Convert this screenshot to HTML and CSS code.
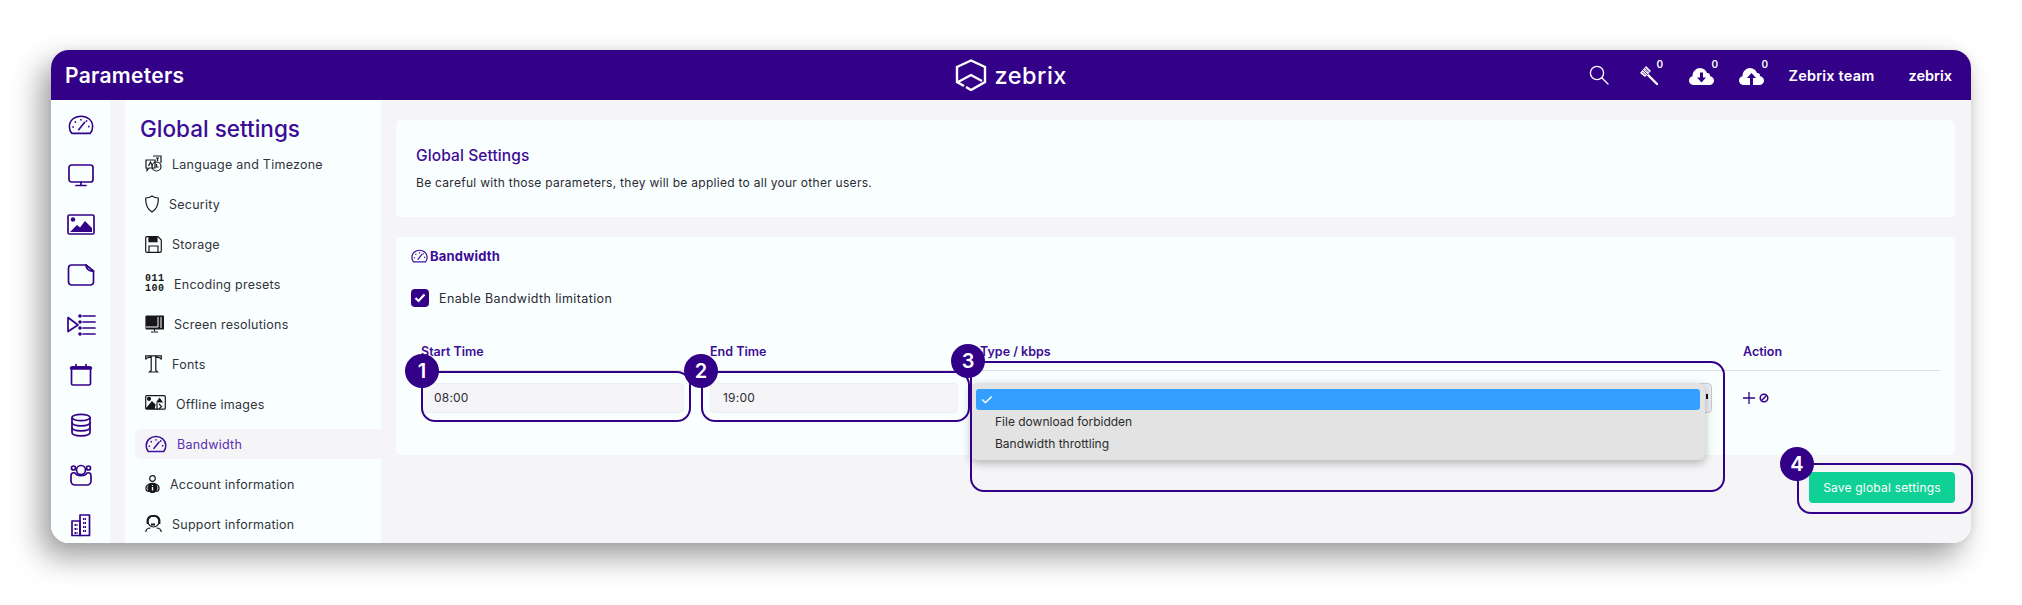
FILE: index.html
```html
<!DOCTYPE html>
<html lang="en">
<head>
  <title>Parameters | Zebrix</title>
  <meta charset="UTF-8" />
  <link rel="stylesheet" href="styles.css">
</head>
<body>
  <div class="app">
    <div class="topbar">
      <div class="page-name">Parameters</div>
      <div class="logo">
        <svg width="32" height="32" viewBox="0 0 32 32" fill="none" stroke="#fff" stroke-width="2.4" stroke-linejoin="miter">
          <path d="M9 27 L2 23 V8 L16 1.5 L30 8 V23 L16 31 L11 28"/>
          <path d="M3 23 L16 16 L27 22"/>
        </svg>
        <span>zebrix</span>
      </div>
      <div class="top-tools">
        <svg class="tool" width="20" height="20" viewBox="0 0 20 20" fill="none" stroke="#fff" stroke-width="1.3">
          <circle cx="8" cy="8" r="6.6"/><path d="M13 13 L19 19" stroke-linecap="round"/>
        </svg>
        <div class="tool-count">
          <svg width="20" height="22" viewBox="0 0 20 22" fill="#fff">
            <path d="M1 9 L7 2 L12 7 L6 13 Z"/><path d="M9 11 L18 20" stroke="#fff" stroke-width="2.4" stroke-linecap="round"/>
            <path d="M3.500 8 L6.500 11 M6 5.500 L9 8.500 M4 6 L9 11 M6 4 L10.500 8" stroke="#330088" stroke-width=".8"/>
          </svg>
          <sup>0</sup>
        </div>
        <div class="tool-count">
          <svg width="25" height="22" viewBox="0 0 25 22">
            <path fill="#fff" d="M5 21 C1.500 21 0 18.500 0 16.500 C0 14 1.700 12.600 3.500 12.200 C3.500 7 7.500 4 11 4 C14.500 4 17 6.200 18 9 C19 8.600 21.500 9.500 21 12 C23.500 12.600 25 14.500 25 16.500 C25 19 23 21 20 21 Z"/>
            <path fill="#330088" d="M11 8.500 H14 V13.500 H17 L12.500 18.500 L8 13.500 H11 Z"/>
          </svg>
          <sup>0</sup>
        </div>
        <div class="tool-count">
          <svg width="25" height="22" viewBox="0 0 25 22">
            <path fill="#fff" d="M5 21 C1.500 21 0 18.500 0 16.500 C0 14 1.700 12.600 3.500 12.200 C3.500 7 7.500 4 11 4 C14.500 4 17 6.200 18 9 C19 8.600 21.500 9.500 21 12 C23.500 12.600 25 14.500 25 16.500 C25 19 23 21 20 21 Z"/>
            <path fill="#330088" d="M11 21 V14 H8 L12.500 9 L17 14 H14 V21 Z"/>
          </svg>
          <sup>0</sup>
        </div>
        <span class="top-link team">Zebrix team</span>
        <span class="top-link">zebrix</span>
      </div>
    </div>

    <div class="content">
      <div class="rail">
        <svg width="26" height="28" viewBox="0 0 28 28"><path d="M4 23 C1.500 20 1.500 17 1.500 15.500 C1.500 9 7 4.500 14 4.500 C21 4.500 26.500 9 26.500 15.500 C26.500 17 26.500 20 24 23 Z"/><path d="M11.500 19 L18 11"/><path d="M14 8 v.5 M8 10.500 v.5 M5.500 16 v.5 M20 9.500 v.5 M22.500 15.500 v.5"/></svg>
        <svg width="28" height="28" viewBox="0 0 28 28"><rect x="2" y="4" width="24" height="17" rx="2.500"/><path d="M14 21 v3 M9 24.500 h10"/></svg>
        <svg width="28" height="28" viewBox="0 0 28 28"><rect x="1" y="4" width="26" height="19" rx="1.500"/><circle class="solid" cx="6" cy="8.500" r="2.200"/><path class="solid" d="M3 21 L10 14 L13 16.500 L18 10 L25 17 V21 Z"/></svg>
        <svg width="28" height="28" viewBox="0 0 28 28"><path d="M4.500 4 H19 C19 8 22 10.500 26.500 10 V21 A3 3 0 0 1 23.500 24 H4.500 A3 3 0 0 1 1.500 21 V7 A3 3 0 0 1 4.500 4 Z"/><path d="M19 4 L26.500 10"/></svg>
        <svg width="30" height="28" viewBox="0 0 30 28"><path d="M2 6.500 L12 14 L2 20.500 Z"/><path d="M17 5 H29 M17 11 H29 M17 17 H29 M17 23 H29"/><circle class="solid" cx="14" cy="5" r="1.800"/><circle class="solid" cx="14" cy="11" r="1.800"/><circle class="solid" cx="14" cy="17" r="1.800"/><circle class="solid" cx="14" cy="23" r="1.800"/></svg>
        <svg width="28" height="28" viewBox="0 0 28 28"><rect x="4.500" y="6" width="19" height="18" rx="1.500"/><path d="M4.500 7 H23.500" stroke-width="3.500"/><path d="M9 3.500 V6 M19 3.500 V6"/></svg>
        <svg width="28" height="28" viewBox="0 0 28 28"><ellipse cx="14" cy="6.500" rx="9" ry="3.200"/><path d="M5 6.500 V21.500 C5 23.500 9 24.800 14 24.800 C19 24.800 23 23.500 23 21.500 V6.500"/><path d="M5 11.500 C5 13.500 9 14.800 14 14.800 C19 14.800 23 13.500 23 11.500 M5 16.500 C5 18.500 9 19.800 14 19.800 C19 19.800 23 18.500 23 16.500"/></svg>
        <svg width="28" height="28" viewBox="0 0 28 28"><circle cx="14" cy="9" r="4.500"/><circle cx="6.500" cy="7" r="2"/><circle cx="21.500" cy="7" r="2"/><path d="M8 12 C5 11 4 13 4 15 V20 A4 4 0 0 0 8 24 H20 A4 4 0 0 0 24 20 V15 C24 13 23 11 20 12 C18 15.500 10 15.500 8 12 Z"/></svg>
        <svg width="28" height="28" viewBox="0 0 28 28"><rect x="13" y="4" width="9.500" height="20.500"/><rect x="5" y="10" width="8" height="14.500"/><path class="dots" d="M7.500 14 h3 M7.500 18 h3 M7.500 22 h3 M16 8 h3 M16 12 h3 M16 16 h3 M16 20 h3"/></svg>
      </div>

      <div class="panel">
        <h2 class="panel-title">Global settings</h2>

        <div class="menu-item">
          <svg width="17" height="18" viewBox="0 0 17 18" class="ico"><path d="M1 5 H10 V13 H4 L2 15.500 V13 H1 Z"/><path d="M8 1 H16 V8"/><circle cx="11.500" cy="11.500" r="4.500"/><path d="M11.500 9 V12 H13.500"/><path d="M3.500 11 L5.500 7 L7.500 11 M11 3 h3 M12.500 3 v3"/></svg>
          <span>Language and Timezone</span>
        </div>
        <div class="menu-item">
          <svg width="14" height="18" viewBox="0 0 14 18" class="ico"><path d="M7 1 C9 2.500 11 3 13.300 3 C13.500 9 12 14 7 17 C2 14 .500 9 .700 3 C3 3 5 2.500 7 1 Z"/></svg>
          <span>Security</span>
        </div>
        <div class="menu-item">
          <svg width="17" height="17" viewBox="0 0 17 17" class="ico"><path d="M1.500 .700 H13 L16.300 4 V15 A1.300 1.300 0 0 1 15 16.300 H2 A1.300 1.300 0 0 1 .700 15 V1.500 Z"/><rect class="fill" x="4" y=".700" width="8" height="5"/><path d="M4 16 V10 H13 V16"/></svg>
          <span>Storage</span>
        </div>
        <div class="menu-item">
          <div class="bits">011<br>100</div>
          <span>Encoding presets</span>
        </div>
        <div class="menu-item">
          <svg width="19" height="18" viewBox="0 0 19 18" class="ico"><rect class="fill" x="1" y="1" width="18" height="13" rx="1"/><path d="M13 2 V12 H1 M16 2 V13" stroke="#fff" stroke-width="1"/><path d="M9.500 14 V16 M6 17 H13"/></svg>
          <span>Screen resolutions</span>
        </div>
        <div class="menu-item">
          <svg width="17" height="18" viewBox="0 0 17 18" class="ico"><path d="M.700 4.500 V.800 H16.300 V4.500 C15.500 3 14 2.200 10.800 2.200 V15.500 L12.500 17 H4.500 L6.200 15.500 V2.200 C3 2.200 1.500 3 .700 4.500 Z"/></svg>
          <span>Fonts</span>
        </div>
        <div class="menu-item">
          <svg width="21" height="18" viewBox="0 0 21 18" class="ico"><rect x=".700" y=".700" width="19.600" height="13.500" rx="1"/><circle class="fill" cx="4" cy="3.800" r="1.500"/><path class="fill" d="M1.500 13.500 L7 7 L10 10 L9 13.500 Z M12 7 L14.500 3.500 L17 7 Z"/><path d="M10 9 L7.500 11.500 L10 14 M14 9 L16.500 11.500 L14 14 M12 8 V15"/></svg>
          <span>Offline images</span>
        </div>
        <div class="menu-item active">
          <svg width="22" height="18" viewBox="0 0 28 23" class="gauge"><path d="M4 21 C1.500 18 1.500 15 1.500 13.500 C1.500 7 7 2 14 2 C21 2 26.500 7 26.500 13.500 C26.500 15 26.500 18 24 21 Z"/><path d="M11.500 17 L18 9"/><path d="M14 6 v.5 M8 8.500 v.5 M5.500 14 v.5 M20 7.500 v.5 M22.500 13.500 v.5"/></svg>
          <span>Bandwidth</span>
        </div>
        <div class="menu-item">
          <svg width="15" height="18" viewBox="0 0 15 18" class="ico"><circle cx="7.500" cy="3.500" r="2.800"/><path d="M4 16.500 C0 16.500 0 11 3.500 9.500 C5.500 8 9.500 8 11.500 9.500 C15 11 15 16.500 11 16.500"/><circle class="fill" cx="7.500" cy="13" r="4.500"/><path d="M7.500 12 V15.500 M7.500 10 V11" stroke="#fff" stroke-width="1.300"/></svg>
          <span>Account information</span>
        </div>
        <div class="menu-item">
          <svg width="17" height="18" viewBox="0 0 17 18" class="ico"><circle cx="8.500" cy="6.500" r="5.500"/><path class="thick" d="M2.500 9 V5 C3 2.500 5.500 .800 8.500 .800 C11.500 .800 14 2.500 14.500 5 V9"/><path class="thick" d="M6 9.500 H10"/><path d="M.800 17 C1 14.500 3 13 5.500 13 M16.200 17 C16 14.500 14 13 11.500 13"/></svg>
          <span>Support information</span>
        </div>
      </div>

      <div class="main">
        <div class="card card-intro">
          <h3>Global Settings</h3>
          <p>Be careful with those parameters, they will be applied to all your other users.</p>
        </div>

        <div class="card card-bandwidth">
          <div class="card-title">
            <svg width="17" height="14" viewBox="0 0 28 23" class="gauge"><path d="M4 21 C1.500 18 1.500 15 1.500 13.500 C1.500 7 7 2 14 2 C21 2 26.500 7 26.500 13.500 C26.500 15 26.500 18 24 21 Z"/><path d="M11.500 17 L18 9"/><path d="M14 6 v.5 M8 8.500 v.5 M5.500 14 v.5 M20 7.500 v.5 M22.500 13.500 v.5"/></svg>
            <span>Bandwidth</span>
          </div>
          <label class="check-row">
            <span class="checkbox">
              <svg width="12" height="10" viewBox="0 0 12 10" fill="none" stroke="#fff" stroke-width="2.200"><path d="M1.500 5 L4.500 8 L10.500 1.500"/></svg>
            </span>
            Enable Bandwidth limitation
          </label>

          <div class="limits">
            <div class="head col-start">Start Time</div>
            <div class="head col-end">End Time</div>
            <div class="head col-type">Type / kbps</div>
            <div class="head col-action">Action</div>

            <div class="cell col-start"><div class="field">08:00</div></div>
            <div class="cell col-end"><div class="field">19:00</div></div>
            <div class="cell col-type"><div class="field select-field"><span class="arrows"></span></div></div>
            <div class="cell col-action actions">
              <svg width="12" height="12" viewBox="0 0 12 12" stroke="#330088" stroke-width="1.300"><path d="M6 0 V12 M0 6 H12"/></svg>
              <svg width="10" height="10" viewBox="0 0 10 10" fill="none" stroke="#330088" stroke-width="1.500"><circle cx="5" cy="5" r="3.800"/><path d="M2.500 7.500 L7.500 2.500"/></svg>
            </div>
          </div>
        </div>

        <div class="save-row">
          <button class="save-btn">Save global settings</button>
        </div>
      </div>
    </div>

    <div class="dropdown">
      <div class="option picked"><span class="tick">✓</span></div>
      <div class="option">File download forbidden</div>
      <div class="option">Bandwidth throttling</div>
    </div>

    <div class="callout box-1"></div>
    <div class="callout box-2"></div>
    <div class="callout box-3"></div>
    <div class="callout box-4"></div>
    <div class="badge badge-1">1</div>
    <div class="badge badge-2">2</div>
    <div class="badge badge-3">3</div>
    <div class="badge badge-4">4</div>
  </div>
</body>
</html>
```

FILE: styles.css
```css
:root {
  --purple: #330088;
  --purple-text: #3d0b96;
  --bg: #f5f5f8;
  --card: #f9ffff;
  --text: #2a2a33;
}

* {
  box-sizing: border-box;
}

html, body {
  margin: 0;
  background: #fff;
  overflow: hidden;
}

body {
  padding: 50px 51px 62px;
  font-family: Inter, "Noto Sans", sans-serif;
  color: var(--text);
}

.app {
  position: relative;
  width: 1920px;
  height: 493px;
  border-radius: 18px;
  box-shadow: -10px 14px 30px rgba(0,0,0,0.38), 2px 0 8px rgba(0,0,0,0.06);
}

.topbar {
  height: 50px;
  background: var(--purple);
  color: #fff;
  border-radius: 18px 18px 0 0;
  display: flex;
  align-items: center;
  padding: 0 19px 0 14px;
  position: relative;
}

.page-name {
  font-size: 21px;
  font-weight: 600;
  letter-spacing: 0.3px;
}

.logo {
  display: flex;
  align-items: center;
  gap: 7px;
  margin-left: 771px;
  font-size: 23.5px;
  font-weight: 500;
  letter-spacing: 0.5px;
}

.top-tools {
  margin-left: auto;
  display: flex;
  align-items: center;
  font-size: 14.5px;
  font-weight: 600;
}

.tool {
  margin-right: 30px;
}

.tool-count {
  display: flex;
  width: 50px;
  align-items: center;
}

.tool-count sup {
  font-size: 10px;
  font-weight: 600;
  line-height: 1;
  margin: -22px 0 0 -2px;
}

.team {
  margin-right: 34px;
  letter-spacing: 0.2px;
}

.content {
  height: 443px;
  display: flex;
  background: var(--bg);
  border-radius: 0 0 18px 18px;
  overflow: hidden;
}

.rail {
  width: 59px;
  background: var(--card);
  display: flex;
  flex-direction: column;
  align-items: center;
  gap: 22px;
  padding-top: 11px;
}

.rail svg {
  fill: none;
  stroke: var(--purple);
  stroke-width: 1.7;
  stroke-linecap: round;
  stroke-linejoin: round;
  flex: none;
}

.rail .solid {
  fill: var(--purple);
  stroke: none;
}

.rail .dots {
  stroke-width: 2;
  stroke-dasharray: 1.500 .5;
  stroke-linecap: butt;
}

.panel {
  width: 256px;
  margin-left: 15px;
  background: var(--card);
  padding-left: 10px;
  flex: none;
}

.panel-title {
  margin: 0;
  height: 49px;
  line-height: 58px;
  padding-left: 5px;
  font-size: 22.5px;
  font-weight: 500;
  color: var(--purple-text);
}

.menu-item {
  height: 30px;
  margin-bottom: 10px;
  padding-left: 10px;
  display: flex;
  align-items: center;
  gap: 10px;
  font-size: 12.5px;
  letter-spacing: 0.25px;
  color: #33333b;
  border-radius: 6px 0 0 6px;
}

.menu-item.active {
  background: var(--bg);
  color: #5a2db0;
}

.ico {
  fill: none;
  stroke: #16161c;
  stroke-width: 1.2;
  flex: none;
}

.ico .fill {
  fill: #16161c;
}

.ico .thick {
  stroke-width: 1.800;
}

.gauge {
  fill: none;
  stroke: #3f109c;
  stroke-width: 2;
  stroke-linecap: round;
  flex: none;
}

.bits {
  width: 19px;
  font-family: "Liberation Mono", monospace;
  font-size: 10px;
  font-weight: 700;
  line-height: 10px;
  color: #16161c;
  letter-spacing: 0.500px;
}

.main {
  flex: 1;
  padding: 20px 16px 0 15px;
}

.card {
  background: var(--card);
  border-radius: 5px;
}

.card-intro {
  height: 97px;
  padding: 26px 20px 0;
  margin-bottom: 20px;
}

.card-intro h3 {
  margin: 0 0 8px;
  font-size: 15.5px;
  line-height: 20px;
  font-weight: 500;
  letter-spacing: 0.1px;
  color: var(--purple-text);
}

.card-intro p {
  margin: 0;
  font-size: 12px;
  line-height: 17px;
  letter-spacing: 0.28px;
}

.card-bandwidth {
  height: 218px;
  padding: 10px 15px 0;
}

.card-title {
  display: flex;
  align-items: center;
  gap: 2px;
  height: 18px;
  font-size: 13px;
  font-weight: 700;
  letter-spacing: 0.2px;
  color: var(--purple-text);
}

.check-row {
  display: flex;
  align-items: center;
  gap: 10px;
  margin-top: 24px;
  height: 18px;
  font-size: 12.5px;
  letter-spacing: 0.38px;
}

.checkbox {
  width: 18px;
  height: 18px;
  background: var(--purple);
  border-radius: 4px;
  display: flex;
  align-items: center;
  justify-content: center;
}

.limits {
  margin: 26px 0 0 10px;
  display: grid;
  grid-template-columns: 289px 264px 759px 207px;
}

.head {
  height: 38px;
  border-bottom: 1px solid #dcdfe4;
  font-size: 12.5px;
  font-weight: 600;
  color: var(--purple-text);
  padding-top: 11px;
}

.head.col-type {
  padding-left: 6px;
}

.head.col-action {
  padding-left: 10px;
}

.cell {
  padding-top: 12px;
}

.cell.col-start { padding-right: 26px; }
.cell.col-end { padding-right: 16px; }
.cell.col-type { padding-right: 21px; }

.field {
  height: 30px;
  line-height: 28px;
  background: var(--bg);
  border: 1px solid #eeeef2;
  border-radius: 4px;
  padding-left: 12px;
  font-size: 12px;
  letter-spacing: 0.2px;
}

.select-field {
  position: relative;
  background: #eceef2;
  border-color: #c9cbd2;
}

.arrows {
  position: absolute;
  right: 3px;
  top: 10px;
  width: 2px;
  height: 5px;
  background: #111;
}

.actions {
  display: flex;
  align-items: center;
  gap: 4px;
  padding: 12px 0 0 10px;
  height: 42px;
}

.save-row {
  display: flex;
  justify-content: flex-end;
  margin-top: 17px;
}

.save-btn {
  width: 146px;
  height: 31px;
  border: none;
  border-radius: 4px;
  background: #10d195;
  color: #fff;
  font-family: inherit;
  font-size: 12px;
  letter-spacing: 0.2px;
}

.dropdown {
  position: absolute;
  left: 920px;
  top: 333px;
  width: 734px;
  height: 77px;
  background: #e3e3e3;
  border-radius: 6px;
  padding: 6px 5px;
  box-shadow: 0 3px 10px rgba(0,0,0,0.28);
  font-size: 12px;
  color: #2b2b2b;
}

.option {
  height: 22px;
  line-height: 22px;
  padding-left: 19px;
}

.option.picked {
  height: 21px;
  background: #33a0ff;
  border-radius: 3px;
  color: #fff;
  padding-left: 4px;
  margin-bottom: 1px;
}

.tick {
  font-size: 15px;
}

.callout {
  position: absolute;
  border: 2px solid var(--purple);
  border-radius: 14px;
}

.box-1 { left: 370px; top: 321px; width: 270px; height: 51px; }
.box-2 { left: 650px; top: 321px; width: 269px; height: 51px; }
.box-3 { left: 919px; top: 311px; width: 755px; height: 131px; }
.box-4 { left: 1746px; top: 413px; width: 176px; height: 51px; }

.badge {
  position: absolute;
  width: 34px;
  height: 34px;
  border-radius: 50%;
  background: var(--purple);
  color: #fff;
  font-size: 20px;
  font-weight: 600;
  line-height: 34px;
  text-align: center;
}

.badge-1 { left: 354px; top: 304px; }
.badge-2 { left: 633px; top: 304px; }
.badge-3 { left: 900px; top: 294px; }
.badge-4 { left: 1729px; top: 397px; }
```
